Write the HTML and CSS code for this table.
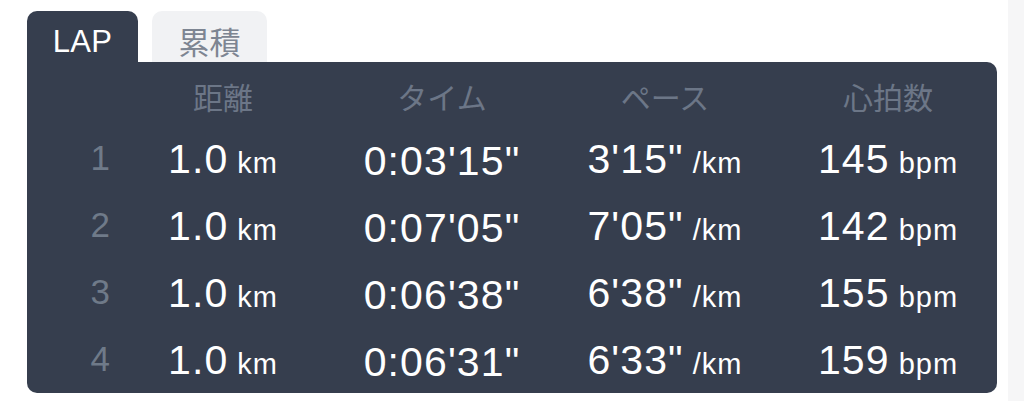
FILE: index.html
```html
<!DOCTYPE html>
<html lang="ja">
<head>
<meta charset="utf-8">
<link rel="stylesheet" href="styles.css">
</head>
<body>
<div class="page">
  <div class="main">
    <div class="tabs">
      <div class="tab tab-active">LAP</div>
      <div class="tab tab-idle">累積</div>
    </div>
    <div class="panel">
      <div class="row head">
        <div class="c num"></div>
        <div class="c">距離</div>
        <div class="c">タイム</div>
        <div class="c">ペース</div>
        <div class="c">心拍数</div>
      </div>
      <div class="row">
        <div class="c num">1</div>
        <div class="c">1.0<span class="u"> km</span></div>
        <div class="c">0:03'15"</div>
        <div class="c">3'15"<span class="u"> /km</span></div>
        <div class="c">145<span class="u"> bpm</span></div>
      </div>
      <div class="row">
        <div class="c num">2</div>
        <div class="c">1.0<span class="u"> km</span></div>
        <div class="c">0:07'05"</div>
        <div class="c">7'05"<span class="u"> /km</span></div>
        <div class="c">142<span class="u"> bpm</span></div>
      </div>
      <div class="row">
        <div class="c num">3</div>
        <div class="c">1.0<span class="u"> km</span></div>
        <div class="c">0:06'38"</div>
        <div class="c">6'38"<span class="u"> /km</span></div>
        <div class="c">155<span class="u"> bpm</span></div>
      </div>
      <div class="row">
        <div class="c num">4</div>
        <div class="c">1.0<span class="u"> km</span></div>
        <div class="c">0:06'31"</div>
        <div class="c">6'33"<span class="u"> /km</span></div>
        <div class="c">159<span class="u"> bpm</span></div>
      </div>
    </div>
  </div>
  <div class="strip"></div>
</div>
</body>
</html>
```

FILE: styles.css
```css
* { box-sizing: border-box; }
html, body { margin: 0; padding: 0; background: #ffffff; }
body {
  font-family: "Liberation Sans", Arial, "Noto Sans CJK JP", sans-serif;
  width: 1024px;
  height: 401px;
  overflow: hidden;
}
.page {
  display: flex;
  height: 401px;
}
.main {
  flex: 1;
  padding: 11px 0 0 27px;
}
.strip {
  width: 16px;
  background: #f6f6f7;
}
.tabs {
  display: flex;
  gap: 14px;
  height: 51px;
}
.tab {
  height: 51px;
  border-radius: 10px 10px 0 0;
  display: flex;
  justify-content: center;
  align-items: center;
  padding-top: 10px;
}
.tab-active {
  width: 111px;
  background: #363e4e;
  color: #ffffff;
  font-size: 31px;
  letter-spacing: 0.3px;
}
.tab-idle {
  width: 115px;
  background: #f1f2f4;
  color: #7d8592;
  font-family: "Noto Sans CJK JP", sans-serif;
  font-size: 31px;
  padding-top: 8px;
}
.panel {
  width: 970px;
  height: 331px;
  background: #363e4e;
  border-radius: 0 10px 10px 10px;
  padding-top: 4px;
}
.row {
  display: grid;
  grid-template-columns: 86px 220px 218px 228px 218px;
  height: 67px;
  align-items: center;
  color: #ffffff;
  font-size: 41px;
  letter-spacing: 1.1px;
  line-height: 67px;
}
.row.head {
  height: 60px;
  line-height: 60px;
  font-family: "Noto Sans CJK JP", sans-serif;
  font-size: 30px;
  letter-spacing: 0;
  color: #6c7687;
}
.c {
  text-align: center;
  white-space: nowrap;
}
.c.num {
  text-align: right;
  padding-right: 3px;
  color: #6f7a89;
  font-size: 35px;
  letter-spacing: 0;
  align-self: start;
  line-height: 63px;
}
.u {
  font-size: 29px;
  letter-spacing: 1px;
}
```
